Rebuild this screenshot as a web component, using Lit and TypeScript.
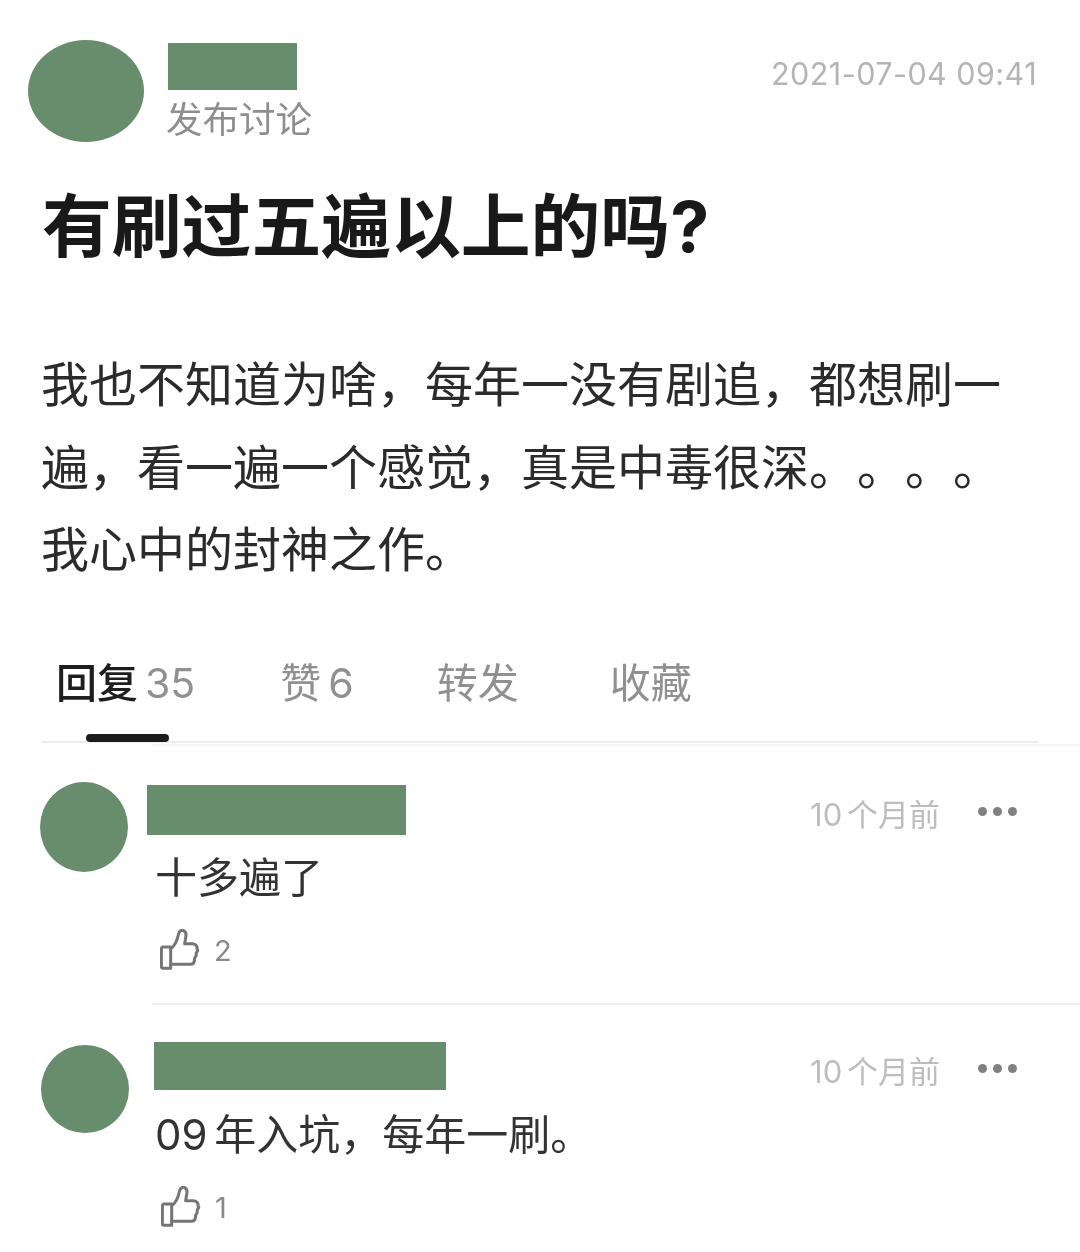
import { LitElement, html, css } from "lit";
import { customElement } from "lit/decorators.js";

const thumb = html`<svg class="thumb" viewBox="0 0 40 42" fill="none" stroke="#757575" stroke-width="3" stroke-linejoin="round" stroke-linecap="round">
  <path d="M3 19h7.700v21.300H3a1.600 1.600 0 0 1-1.600-1.600V20.600A1.600 1.600 0 0 1 3 19z"/>
  <path d="M10.700 20.500c3-1.600 6.200-6.600 8-15 .5-2.400 2.900-3.800 5-2.800 2.100 1 2.600 3.300 2.200 5.800l-1.300 7.300h7.600c3.300 0 5.300 2.400 4.800 5.200l.8 1.500-1.500 2.300-.2 3-1.400 2.200-.5 3.800c-.5 1.600-1.800 2.500-3.500 2.500H10.700"/>
</svg>`;

const comments = [
  { variant: "first", bar: 259, text: "十多遍了", likes: 2 },
  { variant: "second", bar: 292, text: "09 年入坑，每年一刷。", likes: 1 },
];

@customElement("app-root")
export class AppRoot extends LitElement {
  static styles = css`
    :host {
      display: block;
      width: 1080px;
      height: 1252px;
      overflow: hidden;
      background: #fff;
      font-family: "Inter", "Noto Sans CJK SC", sans-serif;
      color: #1e1e1e;
      text-spacing-trim: space-all;
      font-feature-settings: "chws" 0, "palt" 0;
      filter: blur(0.4px);
    }
    .head {
      display: flex;
      padding: 40px 43px 0 28px;
      height: 102px;
    }
    .avatar-main {
      width: 116px;
      height: 102px;
      border-radius: 50%;
      background: #678d6c;
      flex: none;
    }
    .who {
      margin-left: 24px;
      padding-top: 3px;
      flex: 1;
    }
    .bar {
      background: #678d6c;
    }
    .name-main {
      width: 129px;
      height: 47px;
    }
    .role {
      font-size: 36.5px;
      line-height: 40px;
      margin: 10px 0 0 -2px;
      color: #8e8e8e;
    }
    .stamp {
      font-size: 30.5px;
      line-height: 36px;
      margin-top: 16px;
      color: #b4b4b4;
      letter-spacing: 0.45px;
    }
    h1 {
      margin: 35px 0 0 42px;
      font-size: 69.8px;
      line-height: 100px;
      font-weight: 700;
      color: #191919;
    }
    .body {
      margin: 67px 0 0 41px;
      width: 1000px;
      font-size: 48px;
      line-height: 82.5px;
      color: #2b2b2b;
    }
    .tabs {
      display: flex;
      margin: 49px 42px 0;
      height: 102px;
      border-bottom: 2px solid #ececec;
      box-sizing: border-box;
      font-size: 41px;
      line-height: 60px;
      color: #909090;
    }
    .tab {
      position: relative;
      margin-top: 12px;
    }
    .tab:nth-child(1) { margin-left: 14px; }
    .tab:nth-child(2) { margin-left: 85px; }
    .tab:nth-child(3) { margin-left: 83px; }
    .tab:nth-child(4) { margin-left: 91px; }
    .tab b {
      font-weight: 500;
      color: #1e1e1e;
    }
    .tab span {
      margin-left: 7px;
    }
    .tab.on::after {
      content: "";
      position: absolute;
      left: 30px;
      width: 83px;
      height: 8px;
      top: 81px;
      border-radius: 4px;
      background: #1c1c1c;
    }
    .rule {
      height: 2px;
      margin-left: 152px;
      background: #f0f0f0;
    }
    .rule.top {
      margin-top: 1px;
      background: #f5f5f5;
    }
    .comment {
      display: flex;
    }
    .comment.first {
      padding: 36px 0 0 40px;
      height: 221px;
    }
    .comment.second {
      padding: 40px 0 0 41px;
    }
    .avatar {
      width: 88px;
      height: 90px;
      border-radius: 50%;
      background: #678d6c;
      flex: none;
    }
    .second .avatar { height: 88px; }
    .main {
      flex: 1;
      position: relative;
    }
    .first .main { margin-left: 19px; padding-top: 3px; }
    .second .main { margin-left: 25px; margin-top: -3px; }
    .name { height: 50px; }
    .second .name { height: 48px; }
    .meta {
      position: absolute;
      right: 63px;
      top: 13px;
      display: flex;
      align-items: center;
      font-size: 31px;
      line-height: 40px;
      color: #bdbdbd;
      word-spacing: -4px;
    }
    .second .meta { top: 10px; }
    .dots {
      display: flex;
      gap: 6px;
      margin-left: 38px;
      margin-top: -6px;
    }
    .dots i {
      width: 9px;
      height: 9px;
      border-radius: 50%;
      background: #808080;
    }
    .text {
      font-size: 42px;
      line-height: 60px;
      margin: 13px 0 0 8px;
      color: #333;
      word-spacing: -5px;
    }
    .second .text { margin: 15px 0 0 1px; }
    .likes {
      display: flex;
      align-items: center;
      margin: 20px 0 0 13px;
      font-size: 29px;
      color: #8a8a8a;
    }
    .second .likes { margin: 20px 0 0 7px; }
    .thumb {
      width: 40px;
      height: 42px;
      margin-right: 14px;
    }
    .count {
      margin-top: 4px;
    }
  `;

  render() {
    return html`
      <div class="head">
        <div class="avatar-main"></div>
        <div class="who">
          <div class="bar name-main"></div>
          <div class="role">发布讨论</div>
        </div>
        <div class="stamp">2021-07-04 09:41</div>
      </div>
      <h1>有刷过五遍以上的吗?</h1>
      <div class="body">我也不知道为啥，每年一没有剧追，都想刷一遍，看一遍一个感觉，真是中毒很深。。。。我心中的封神之作。</div>
      <div class="tabs">
        <div class="tab on"><b>回复</b><span>35</span></div>
        <div class="tab">赞<span>6</span></div>
        <div class="tab">转发</div>
        <div class="tab">收藏</div>
      </div>
      <div class="rule top"></div>
      ${comments.map(
        (c, i) => html`
          ${i ? html`<div class="rule"></div>` : ""}
          <div class="comment ${c.variant}">
            <div class="avatar"></div>
            <div class="main">
              <div class="bar name" style="width:${c.bar}px"></div>
              <div class="meta">10 个月前<div class="dots"><i></i><i></i><i></i></div></div>
              <div class="text">${c.text}</div>
              <div class="likes">${thumb}<span class="count">${c.likes}</span></div>
            </div>
          </div>
        `
      )}
    `;
  }
}
